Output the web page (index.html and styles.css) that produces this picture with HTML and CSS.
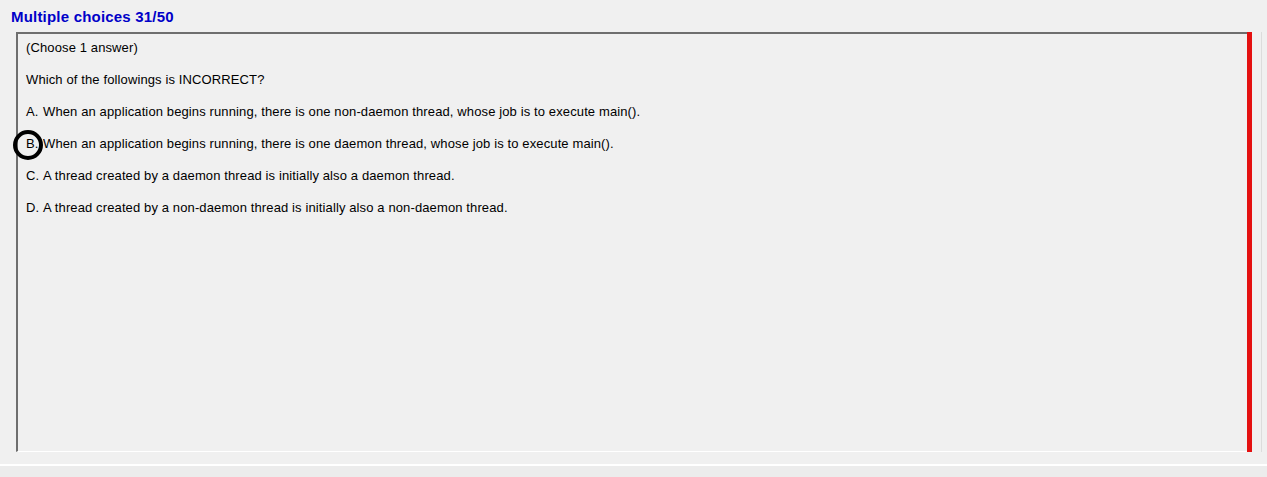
FILE: index.html
```html
<!DOCTYPE html>
<html>
<head>
<meta charset="utf-8">
<link rel="stylesheet" href="styles.css">
</head>
<body>
<div class="page">
  <div class="title">Multiple choices 31/50</div>
  <div class="row">
    <div class="box">
      <div class="line">(Choose 1 answer)</div>
      <div class="line">Which of the followings is INCORRECT?</div>
      <div class="line"><span class="label">A.</span>When an application begins running, there is one non-daemon thread, whose job is to execute main().</div>
      <div class="line"><span class="circle"></span><span class="label">B.</span>When an application begins running, there is one daemon thread, whose job is to execute main().</div>
      <div class="line"><span class="label">C.</span>A thread created by a daemon thread is initially also a daemon thread.</div>
      <div class="line"><span class="label">D.</span>A thread created by a non-daemon thread is initially also a non-daemon thread.</div>
    </div>
    <div class="redbar"></div>
    <div class="edge"></div>
  </div>
  <div class="footer"></div>
</div>
</body>
</html>
```
FILE: styles.css
```css
html, body {
  margin: 0;
  padding: 0;
  background: #f0f0f0;
  width: 1267px;
  height: 477px;
  overflow: hidden;
}
.page {
  display: flex;
  flex-direction: column;
  height: 477px;
  font-family: "Liberation Sans", Arial, sans-serif;
}
.title {
  color: #0000c8;
  font-weight: bold;
  font-size: 15px;
  letter-spacing: 0.2px;
  padding: 8px 0 0 11px;
  height: 23px;
  box-sizing: border-box;
  line-height: 17px;
}
.row {
  display: flex;
  height: 420px;
  margin-top: 9px;
}
.box {
  margin-left: 16px;
  width: 1231px;
  box-sizing: border-box;
  border-top: 2px solid #6e6e6e;
  border-left: 2px solid #6e6e6e;
  border-bottom: 1px solid #ffffff;
  padding: 5px 0 0 8px;
  background: #f0f0f0;
}
.line {
  font-size: 13px;
  line-height: 17px;
  height: 32px;
  color: #000;
  white-space: pre;
  letter-spacing: 0.12px;
  position: relative;
}
.label {
  display: inline-block;
  width: 17px;
  letter-spacing: 0;
}
.circle {
  position: absolute;
  left: -13px;
  top: -5px;
  width: 22px;
  height: 22px;
  border: 4px solid #000;
  border-radius: 50%;
}
.redbar {
  width: 5px;
  background: #e41010;
}
.edge {
  margin-left: 9px;
  width: 1px;
  background: #dcdcdc;
}
.footer {
  margin-top: 12px;
  border-top: 2px solid #ffffff;
  flex: 1;
  background: #ececec;
}
```
